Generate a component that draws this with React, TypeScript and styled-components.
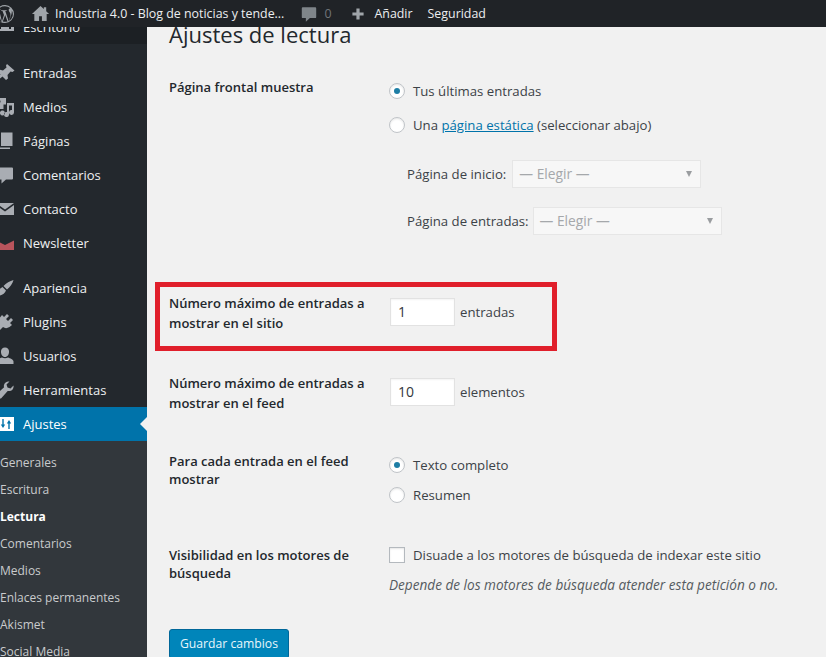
import { ReactNode } from 'react';
import styled, { createGlobalStyle } from 'styled-components';

const GlobalStyle = createGlobalStyle`
  html, body { margin: 0; padding: 0; background: #f1f1f1; }
  body { font-family: "Open Sans", "Noto Sans", "Liberation Sans", sans-serif; }
  * { box-sizing: border-box; }
`;

// dashicons, redrawn on a 20x20 grid
const icons: Record<string, ReactNode> = {
  wp: (
    <path
      fillRule="evenodd"
      d="M10 1a9 9 0 1 0 0 18 9 9 0 0 0 0-18zm0 1.200c2 0 3.900.8 5.300 2-.9 0-1.600.8-1.600 1.700 0 .8.5 1.500 1 2.300.4.6.8 1.500.8 2.700 0 .9-.3 1.900-.8 3.200l-1 3.300-3.400-10.300c.6 0 1.100-.1 1.100-.1.500-.1.500-.8 0-.8 0 0-1.500.1-2.500.1-.9 0-2.400-.1-2.400-.1-.5 0-.6.8 0 .8 0 0 .5.1 1 .1l1.500 4-2.100 6.300L4.100 5.900c.6 0 1.100-.1 1.100-.1.5-.1.500-.8 0-.8l-1.700.1A7.800 7.800 0 0 1 10 2.200zM2.500 7.400l4.200 11.100A7.800 7.800 0 0 1 2.500 7.400zM10.200 10.900l2.300 6.500a7.800 7.800 0 0 1-4.700.1l2.400-6.600zM16.800 6.400A7.800 7.800 0 0 1 14 17l2.300-6.600c.4-1.100.6-2 .5-4z"
    />
  ),
  home: <path d="M10 2 1 10.500h2.500V18h5v-5h3v5h5v-7.500H19L16 7.600V3.500h-2.500v1.700z" />,
  dashboard: <path d="M1 14a9 9 0 0 1 18 0v4H1zM4 14h2v2H4zm10 0h2v2h-2z" fillRule="evenodd" />,
  comment: <path d="M3 2.500h14a1 1 0 0 1 1 1v10a1 1 0 0 1-1 1h-6l-4.500 4v-4H3a1 1 0 0 1-1-1v-10a1 1 0 0 1 1-1z" />,
  plus: <path d="M8 3h4v5h5v4h-5v5H8v-5H3V8h5z" />,
  pin: <path d="M12 1 19.500 7.500 17.500 9 15.500 8.500 12.500 12 13 15.500 11 17 7.500 13.500 2 18 1 17 5.500 11.500 2.500 8.500 4 6.500 8 7.500 11.500 4.500 11 2.500z" />,
  media: (
    <path
      fillRule="evenodd"
      d="M1 1h10v6.500H8.500V12H1V1zm3 2a1.500 1.500 0 1 0 0 3 1.500 1.500 0 0 0 0-3zM12 6h7v9.500a2.500 2.500 0 1 1-2-2.400V8.500h-3v9a2.500 2.500 0 1 1-2-2.400zM7.500 13.500a2.500 2.500 0 1 1-.1 0z"
    />
  ),
  pages: <path d="M6 1.500h11.500V15H6zM3 4h1.500v12.500H15V18H3z" />,
  mail: <path d="M1 4h18l-9 6.500zM1 6l9 6.500L19 6v10H1z" />,
  envelope: <path d="M1 7.500 10 12l9-4.500V17H1z" />,
  brush: <path d="M18.500 2C15 3 11 5 8.500 8L12 11.500C15 9 17.500 6 18.500 2zM7.500 9 11 12.500C9.500 16 6 18 1 18c2.500-2 2-5 3.500-7z" />,
  plug: <path d="M12 2 14 4 11 7 13 9 16 6 18 8 15 11 17 13 14.500 15C12 16.500 10 16.500 8 15L4 19 1 16 5 12C3.500 10 3.500 8 5 5.500L7 3 9 5z" />,
  user: <path d="M10 1.500a4 4 0 0 1 4 4.500c0 2.500-1.500 5-4 5S6 8.500 6 6a4 4 0 0 1 4-4.500zM1.500 15.500c0-2 3.500-3.300 5.500-4 1.800 1 4.200 1 6 0 2 .7 5.500 2 5.500 4V18h-17z" />,
  wrench: <path d="M18.500 5.500c.5 2.500-1 5-3.500 5.500-.8.200-1.600.100-2.300-.1L6 18.500H4.500L1.500 15.500V14l7.600-6.700c-.3-.8-.3-1.600-.1-2.300C9.600 2.500 12 1 14.500 1.500l-3 3 1 3 3 1z" />,
  sliders: (
    <path
      fillRule="evenodd"
      d="M1 3h18v14H1zM7.300 5v5.500H5.800L8 14l2.200-3.500H8.700V5zM13.300 15V9.500h-1.500L14 6l2.200 3.500h-1.500V15z"
    />
  ),
};

function Icon({ name, size = 20 }: { name: string; size?: number }) {
  return (
    <svg width={size} height={size} viewBox="0 0 20 20" fill="currentColor">
      {icons[name]}
    </svg>
  );
}

const Screen = styled.div`
  width: 826px;
  height: 657px;
  overflow: hidden;
  display: flex;
  flex-direction: column;
`;

const AdminBar = styled.header`
  flex: none;
  height: 27px;
  background: #202327;
  color: #eceef0;
  display: flex;
  align-items: center;
  font-size: 12.400px;
  margin-left: -5px;
`;
const BarIcon = styled.span<{ $gap: number; $color?: string }>`
  display: flex;
  margin-left: ${(p) => p.$gap}px;
  color: ${(p) => p.$color ?? '#a0a5aa'};
`;
const BarText = styled.span<{ $gap: number; $color?: string }>`
  margin-left: ${(p) => p.$gap}px;
  color: ${(p) => p.$color ?? '#eceef0'};
  white-space: nowrap;
`;

const Body = styled.div`
  flex: 1;
  min-height: 0;
  display: flex;
`;

const Sidebar = styled.nav`
  flex: none;
  width: 147px;
  background: #23282d;
  color: #eef0f1;
  font-size: 13px;
  overflow: hidden;
`;
const TopItem = styled.div`
  height: 17px;
  background: #1c2024;
  display: flex;
  align-items: flex-end;
  gap: 8px;
  color: #e6e8ea;
  line-height: 17px;
  overflow: hidden;

  & > span:first-child {
    margin-bottom: 11px;
  }
  & > span:last-child {
    margin-bottom: 8px;
  }
`;
const MenuGroup = styled.div<{ $top: number }>`
  margin-top: ${(p) => p.$top}px;
`;
const MenuItem = styled.div<{ $active?: boolean }>`
  height: 34px;
  display: flex;
  align-items: center;
  gap: 8px;
  position: relative;
  background: ${(p) => (p.$active ? '#0073aa' : 'transparent')};
  color: ${(p) => (p.$active ? '#ffffff' : '#eef0f1')};

  ${(p) =>
    p.$active &&
    `&::after {
      content: '';
      position: absolute;
      right: 0;
      top: 10px;
      border: 7px solid transparent;
      border-right-color: #f1f1f1;
      border-left-width: 0;
    }`}
`;
const MenuIcon = styled.span<{ $color?: string; $active?: boolean }>`
  flex: none;
  width: 15px;
  display: flex;
  justify-content: flex-end;
  color: ${(p) => (p.$active ? '#ffffff' : p.$color ?? '#a9adb3')};

  svg {
    flex: none;
  }
`;
const SubMenu = styled.div`
  background: #32373c;
  padding-top: 8px;
  padding-bottom: 20px;
`;
const SubItem = styled.div<{ $current?: boolean }>`
  height: 27px;
  line-height: 27px;
  font-size: 12px;
  white-space: nowrap;
  color: ${(p) => (p.$current ? '#ffffff' : '#c9cbcd')};
  font-weight: ${(p) => (p.$current ? 700 : 400)};
`;

const Main = styled.main`
  flex: 1;
  min-width: 0;
  padding-left: 22px;
  color: #23282d;
  font-size: 13.200px;
  overflow: hidden;
`;
const Title = styled.h1`
  margin: -6px 0 0;
  height: 26px;
  line-height: 26px;
  font-size: 22px;
  font-weight: 400;
  color: #23282d;
`;

const Row = styled.div<{ $top: number; $leading?: number }>`
  display: grid;
  grid-template-columns: 220px 1fr;
  margin-top: ${(p) => p.$top}px;
  line-height: ${(p) => p.$leading ?? 20}px;
  position: relative;
`;
const HighlightRow = styled(Row)`
  &::after {
    content: '';
    box-sizing: border-box;
    position: absolute;
    left: -14px;
    top: -11px;
    width: 402px;
    height: 69px;
    border: 5px solid #e01f2b;
    pointer-events: none;
  }
`;
const Label = styled.div`
  font-weight: 600;
  font-size: 13px;
  color: #23282d;
  width: 205px;
`;
const Field = styled.div<{ $top?: number; $gap?: number }>`
  display: flex;
  align-items: center;
  height: 26px;
  margin-top: ${(p) => p.$top ?? 0}px;
  gap: ${(p) => p.$gap ?? 8}px;
  color: #3c4247;
  white-space: nowrap;
`;
const Stack = styled.div`
  display: flex;
  flex-direction: column;
`;
const RadioMark = styled.span<{ $checked?: boolean }>`
  flex: none;
  width: 16px;
  height: 16px;
  border-radius: 50%;
  background: #fff;
  border: 1px solid #c0c4c8;
  box-shadow: inset 0 1px 2px rgba(0, 0, 0, 0.1);
  display: flex;
  align-items: center;
  justify-content: center;

  &::after {
    content: '';
    width: 6px;
    height: 6px;
    border-radius: 50%;
    background: ${(p) => (p.$checked ? '#1e7ea5' : 'transparent')};
  }
`;
const CheckMark = styled.span`
  flex: none;
  width: 16px;
  height: 16px;
  background: #fff;
  border: 1px solid #b4b9be;
  box-shadow: inset 0 1px 2px rgba(0, 0, 0, 0.1);
`;
const PageLink = styled.a`
  color: #0073aa;
  text-decoration: underline;
`;
const Indent = styled.div<{ $top: number; $gap: number }>`
  display: flex;
  align-items: center;
  height: 28px;
  margin-top: ${(p) => p.$top}px;
  padding-left: 18px;
  gap: ${(p) => p.$gap}px;
  color: #3c4247;
  white-space: nowrap;
`;
const FakeSelect = styled.div`
  width: 189px;
  height: 28px;
  background: #f7f7f7;
  border: 1px solid #e6e6e6;
  color: #a5a8ab;
  display: flex;
  align-items: center;
  justify-content: space-between;
  padding: 0 8px 0 6px;
  font-size: 13.800px;

  &::after {
    content: '';
    border-left: 3px solid transparent;
    border-right: 3px solid transparent;
    border-top: 6px solid #9a9da0;
  }
`;
const NumberBox = styled.div`
  width: 65px;
  height: 28px;
  margin-left: 1px;
  background: #fff;
  border: 1px solid #e2e2e2;
  box-shadow: inset 0 1px 2px rgba(0, 0, 0, 0.05);
  display: flex;
  align-items: center;
  padding-left: 7px;
  color: #32373c;
  font-size: 14px;
`;
const Hint = styled.p`
  margin: 7px 0 0;
  font-size: 13.600px;
  font-style: italic;
  color: #555b60;
  line-height: 20px;
  white-space: nowrap;
`;
const SaveButton = styled.button`
  display: block;
  margin-top: 34px;
  width: 120px;
  height: 30px;
  padding: 0;
  background: #0085ba;
  border: 1px solid #006799;
  border-radius: 3px;
  color: #e8f6fb;
  font: inherit;
  font-size: 12.200px;
  line-height: 26px;
`;

const primaryMenu = [
  { icon: 'pin', label: 'Entradas' },
  { icon: 'media', label: 'Medios' },
  { icon: 'pages', label: 'Páginas' },
  { icon: 'comment', label: 'Comentarios' },
  { icon: 'mail', label: 'Contacto' },
  { icon: 'envelope', label: 'Newsletter', color: '#b9545c' },
];
const secondaryMenu = [
  { icon: 'brush', label: 'Apariencia' },
  { icon: 'plug', label: 'Plugins' },
  { icon: 'user', label: 'Usuarios' },
  { icon: 'wrench', label: 'Herramientas' },
];
const subMenu = [
  'Generales',
  'Escritura',
  'Lectura',
  'Comentarios',
  'Medios',
  'Enlaces permanentes',
  'Akismet',
  'Social Media',
];

export default function App() {
  return (
    <Screen>
      <GlobalStyle />
      <AdminBar>
        <BarIcon $gap={0}><Icon name="wp" size={20} /></BarIcon>
        <BarIcon $gap={16}><Icon name="home" size={19} /></BarIcon>
        <BarText $gap={5}>Industria 4.0 - Blog de noticias y tende...</BarText>
        <BarIcon $gap={16} $color="#7f858a"><Icon name="comment" size={18} /></BarIcon>
        <BarText $gap={6} $color="#70757a">0</BarText>
        <BarIcon $gap={19}><Icon name="plus" size={16} /></BarIcon>
        <BarText $gap={8}>Añadir</BarText>
        <BarText $gap={15}>Seguridad</BarText>
      </AdminBar>
      <Body>
        <Sidebar>
          <TopItem>
            <MenuIcon><Icon name="dashboard" size={20} /></MenuIcon>
            <span>Escritorio</span>
          </TopItem>
          <MenuGroup $top={12}>
            {primaryMenu.map((item) => (
              <MenuItem key={item.label}>
                <MenuIcon $color={item.color}><Icon name={item.icon} /></MenuIcon>
                <span>{item.label}</span>
              </MenuItem>
            ))}
          </MenuGroup>
          <MenuGroup $top={11}>
            {secondaryMenu.map((item) => (
              <MenuItem key={item.label}>
                <MenuIcon><Icon name={item.icon} /></MenuIcon>
                <span>{item.label}</span>
              </MenuItem>
            ))}
            <MenuItem $active>
              <MenuIcon $active><Icon name="sliders" /></MenuIcon>
              <span>Ajustes</span>
            </MenuItem>
          </MenuGroup>
          <SubMenu>
            {subMenu.map((label) => (
              <SubItem key={label} $current={label === 'Lectura'}>{label}</SubItem>
            ))}
          </SubMenu>
        </Sidebar>
        <Main>
          <Title>Ajustes de lectura</Title>
          <Row $top={30}>
            <Label>Página frontal muestra</Label>
            <Stack>
              <Field $top={1}>
                <RadioMark $checked />
                Tus últimas entradas
              </Field>
              <Field $top={8}>
                <RadioMark />
                <span>Una <PageLink>página estática</PageLink> (seleccionar abajo)</span>
              </Field>
              <Indent $top={22} $gap={6}>Página de inicio: <FakeSelect>— Elegir —</FakeSelect></Indent>
              <Indent $top={19} $gap={4}>Página de entradas: <FakeSelect>— Elegir —</FakeSelect></Indent>
            </Stack>
          </Row>
          <HighlightRow $top={58}>
            <Label>Número máximo de entradas a mostrar en el sitio</Label>
            <Field $top={6} $gap={5}>
              <NumberBox>1</NumberBox>
              entradas
            </Field>
          </HighlightRow>
          <Row $top={40}>
            <Label>Número máximo de entradas a mostrar en el feed</Label>
            <Field $top={6} $gap={5}>
              <NumberBox>10</NumberBox>
              elementos
            </Field>
          </Row>
          <Row $top={39} $leading={18}>
            <Label>Para cada entrada en el feed mostrar</Label>
            <Stack>
              <Field>
                <RadioMark $checked />
                Texto completo
              </Field>
              <Field $top={4}>
                <RadioMark />
                Resumen
              </Field>
            </Stack>
          </Row>
          <Row $top={38} $leading={18}>
            <Label>Visibilidad en los motores de búsqueda</Label>
            <Stack>
              <Field $top={-4}>
                <CheckMark />
                Disuade a los motores de búsqueda de indexar este sitio
              </Field>
              <Hint>Depende de los motores de búsqueda atender esta petición o no.</Hint>
            </Stack>
          </Row>
          <SaveButton>Guardar cambios</SaveButton>
        </Main>
      </Body>
    </Screen>
  );
}
